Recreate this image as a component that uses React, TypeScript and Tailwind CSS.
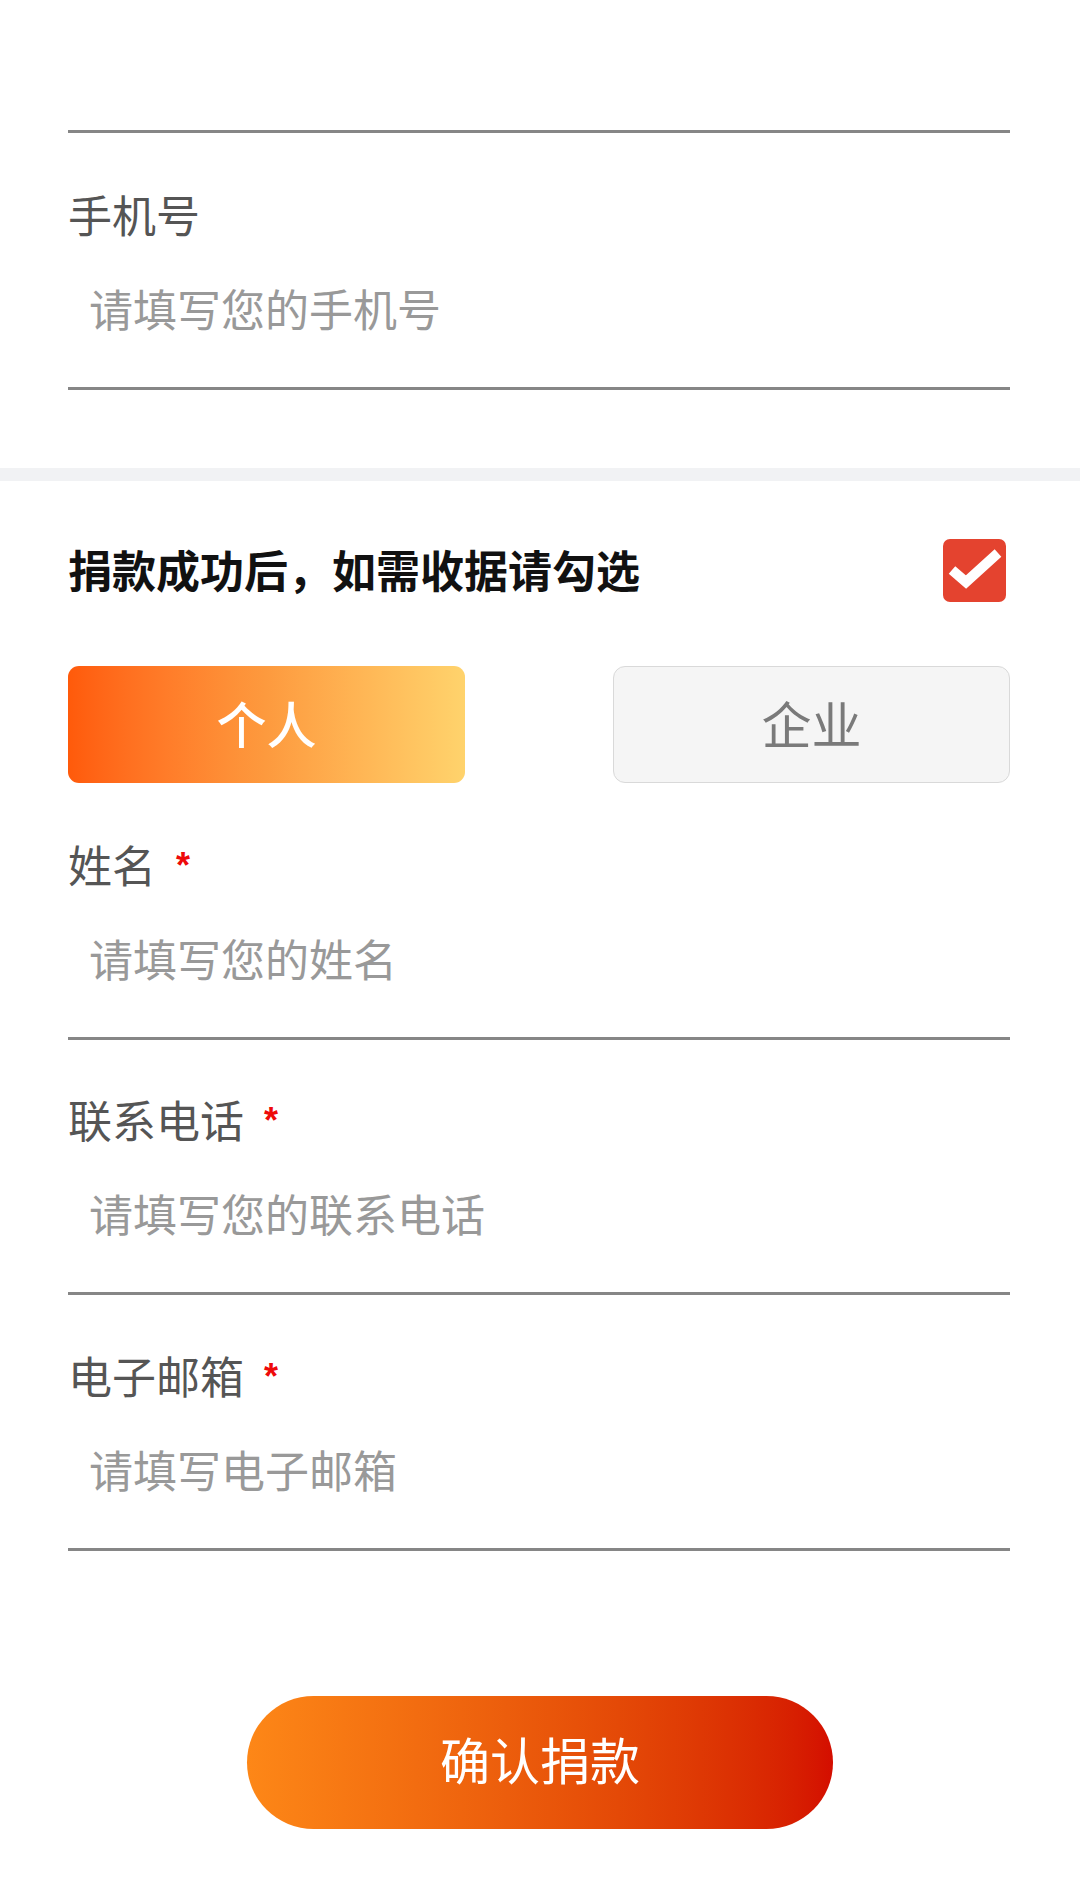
import React from "react";

function Field({ label, placeholder, required, labelMt }: { label: string; placeholder: string; required?: boolean; labelMt: string }) {
  return (
    <div>
      <div className={`${labelMt} flex h-[60px] items-center`}>
        <span className="mb-[6px] text-[44px] leading-[60px] text-[#555555]">{label}</span>
        {required && (
          <span className="ml-[20px] mb-[2px] font-['Liberation_Sans',sans-serif] text-[36px] font-bold leading-none text-[#ee0a0a]">*</span>
        )}
      </div>
      <div className="mt-[34px] flex h-[60px] items-center pl-[21px]">
        <span className="mb-[6px] text-[44px] leading-[60px] text-[#999999]">{placeholder}</span>
      </div>
      <div className="mt-[46px] h-[3px] bg-[#868686]" />
    </div>
  );
}

export default function App() {
  return (
    <div className="h-[1882px] w-[1080px] overflow-hidden bg-white font-['Noto_Sans_CJK_SC','Noto_Sans',sans-serif]">
      <div className="pl-[68px] pr-[70px]">
        <div className="h-[130px]" />
        <div className="h-[3px] bg-[#868686]" />
        <Field label="手机号" placeholder="请填写您的手机号" labelMt="mt-[54px]" />
      </div>
      <div className="mt-[78px] h-[13px] bg-[#f1f2f4]" />
      <div className="pl-[68px] pr-[70px]">
        <div className="mt-[58px] flex h-[63px] items-center justify-between">
          <span className="mb-[4px] text-[44px] font-bold leading-[60px] text-[#111111]">捐款成功后，如需收据请勾选</span>
          <div className="mr-[4px] flex h-[63px] w-[63px] items-center justify-center rounded-[7px] bg-[#e4432f]">
            <svg width="63" height="63" viewBox="0 0 63 63">
              <path d="M9 31 L23 43 L55 14" fill="none" stroke="#ffffff" strokeWidth="10" strokeLinejoin="miter" />
            </svg>
          </div>
        </div>
        <div className="mt-[64px] flex h-[117px] justify-between">
          <div className="flex w-[397px] items-center justify-center rounded-[11px] bg-gradient-to-r from-[#ff5a0a] via-[#fd9a3e] to-[#ffd36c]">
            <span className="mb-[5px] text-[50px] font-medium leading-none text-white">个人</span>
          </div>
          <div className="flex w-[397px] items-center justify-center rounded-[12px] border-[1.5px] border-[#d9d9d9] bg-[#f5f5f5]">
            <span className="mb-[5px] text-[50px] leading-none text-[#7a7a7a]">企业</span>
          </div>
        </div>
        <Field label="姓名" placeholder="请填写您的姓名" required labelMt="mt-[54px]" />
        <Field label="联系电话" placeholder="请填写您的联系电话" required labelMt="mt-[52px]" />
        <Field label="电子邮箱" placeholder="请填写电子邮箱" required labelMt="mt-[53px]" />
      </div>
      <div className="mt-[145px] flex justify-center">
        <button className="flex h-[133px] w-[586px] items-center justify-center rounded-full bg-gradient-to-r from-[#fd8717] to-[#d40d00]">
          <span className="mb-[9px] text-[50px] leading-none text-white">确认捐款</span>
        </button>
      </div>
    </div>
  );
}
